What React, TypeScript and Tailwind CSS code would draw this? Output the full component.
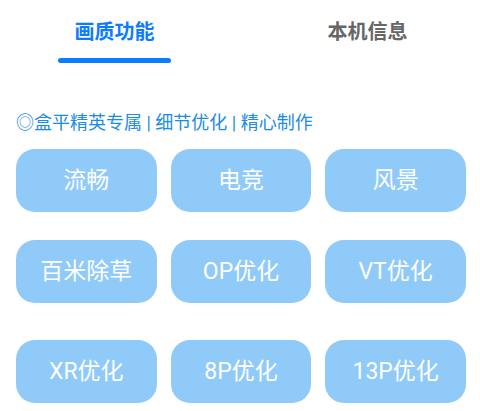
const presets = [
  ["流畅", "电竞", "风景"],
  ["百米除草", "OP优化", "VT优化"],
  ["XR优化", "8P优化", "13P优化"],
];

const rowGaps = ["mt-0", "mt-[28px]", "mt-[37px]"];

export default function App() {
  return (
    <div className="h-[411px] w-[480px] bg-white font-['Roboto','Noto_Sans_CJK_SC',sans-serif]">
      <div className="flex gap-[140px] pl-[58px] pt-[18px]">
        <div className="flex w-[113px] flex-col items-center">
          <span className="text-[20px] font-bold leading-[28px] text-[#0b7bff]">画质功能</span>
          <div className="mt-[12px] h-[5px] w-full rounded-full bg-[#0b7bff]" />
        </div>
        <div className="flex w-[113px] flex-col items-center">
          <span className="text-[20px] font-bold leading-[28px] text-[#666666]">本机信息</span>
        </div>
      </div>

      <p className="mt-[48px] pl-[16px] text-[18px] leading-[24px] text-[#1a8ce8]">
        ◎盒平精英专属 | 细节优化 | 精心制作
      </p>

      <div className="mt-[14px] pl-[16px] pr-[14px]">
        {presets.map((row, i) => (
          <div key={i} className={`grid grid-cols-3 gap-[14px] ${rowGaps[i]}`}>
            {row.map((label) => (
              <button
                key={label}
                className="flex h-[63px] items-center justify-center rounded-[19px] bg-[#90caf9] pt-[2px] text-[23px] text-white"
              >
                {label}
              </button>
            ))}
          </div>
        ))}
      </div>
    </div>
  );
}
